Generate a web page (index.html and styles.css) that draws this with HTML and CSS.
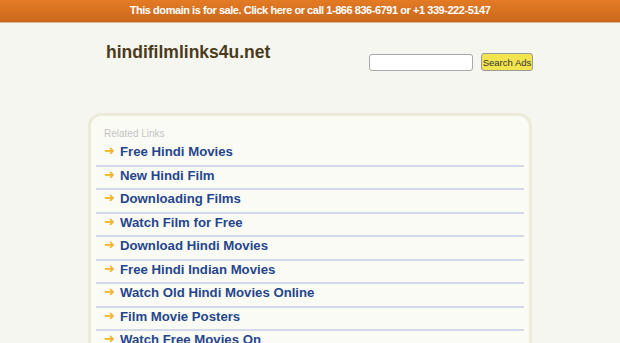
FILE: index.html
```html
<!DOCTYPE html>
<html lang="en">
<head>
    <meta charset="UTF-8">
    <title>hindifilmlinks4u.net</title>
    <link rel="stylesheet" href="styles.css">
</head>
<body>
    <div class="sale-bar">This domain is for sale. Click here or call 1-866 836-6791 or +1 339-222-5147</div>

    <div class="header">
        <div class="site-name">hindifilmlinks4u.net</div>
        <div class="search">
            <input type="text" class="search-input">
            <button class="search-btn">Search Ads</button>
        </div>
    </div>

    <div class="links-box">
        <div class="links-title">Related Links</div>
        <ul class="links">
            <li><span class="arrow">&#10140;</span><a href="#">Free Hindi Movies</a></li>
            <li><span class="arrow">&#10140;</span><a href="#">New Hindi Film</a></li>
            <li><span class="arrow">&#10140;</span><a href="#">Downloading Films</a></li>
            <li><span class="arrow">&#10140;</span><a href="#">Watch Film for Free</a></li>
            <li><span class="arrow">&#10140;</span><a href="#">Download Hindi Movies</a></li>
            <li><span class="arrow">&#10140;</span><a href="#">Free Hindi Indian Movies</a></li>
            <li><span class="arrow">&#10140;</span><a href="#">Watch Old Hindi Movies Online</a></li>
            <li><span class="arrow">&#10140;</span><a href="#">Film Movie Posters</a></li>
            <li><span class="arrow">&#10140;</span><a href="#">Watch Free Movies On</a></li>
        </ul>
    </div>
</body>
</html>
```

FILE: styles.css
```css
body {
    margin: 0;
    padding: 0;
    background-color: #f6f6f0;
    font-family: "Liberation Sans", Arial, sans-serif;
    overflow: hidden;
}

.sale-bar {
    height: 22px;
    line-height: 21px;
    text-align: center;
    color: #ffffff;
    font-size: 11px;
    letter-spacing: -0.45px;
    font-weight: bold;
    background: linear-gradient(#e47b24, #c9681d);
    border-bottom: 1px solid #d9b896;
}

.header {
    display: flex;
    justify-content: space-between;
    align-items: flex-start;
    width: 427px;
    margin-left: 106px;
    padding-top: 19px;
}

.site-name {
    font-size: 17.5px;
    line-height: 20px;
    font-weight: bold;
    color: #4b3b1c;
}

.search {
    display: flex;
    align-items: center;
    gap: 8px;
    margin-top: 11px;
}

.search-input {
    width: 100px;
    height: 13px;
    border: 1px solid #a8a8a8;
    border-radius: 3px;
    background: #ffffff;
    padding: 1px;
}

.search-btn {
    width: 52px;
    height: 18px;
    padding: 0;
    white-space: nowrap;
    font-family: "Liberation Sans", Arial, sans-serif;
    font-size: 9.5px;
    color: #333;
    background: #f2e44e;
    border: 1px solid #9a9a9a;
    border-radius: 3px;
}

.links-box {
    width: 428px;
    margin: 42px 0 0 88px;
    padding: 12px 5px 0 5px;
    border: 3px solid #ecebd9;
    border-bottom: none;
    border-radius: 13px 13px 0 0;
    background: #fbfbf6;
    height: 300px;
}

.links-title {
    font-size: 10px;
    line-height: 12px;
    color: #c3c3c3;
    padding-left: 8px;
    margin-bottom: 3px;
}

.links {
    list-style: none;
    margin: 0;
    padding: 0;
}

.links li {
    height: 21.5px;
    line-height: 16px;
    border-bottom: 2px solid #d3d8ea;
    padding-left: 8px;
}

.arrow {
    display: inline-block;
    width: 16px;
    color: #f0b62c;
    font-size: 13px;
    font-family: "DejaVu Sans", sans-serif;
    vertical-align: 1px;
}

.links a {
    color: #26468c;
    font-size: 13.2px;
    font-weight: bold;
    text-decoration: none;
}
```
